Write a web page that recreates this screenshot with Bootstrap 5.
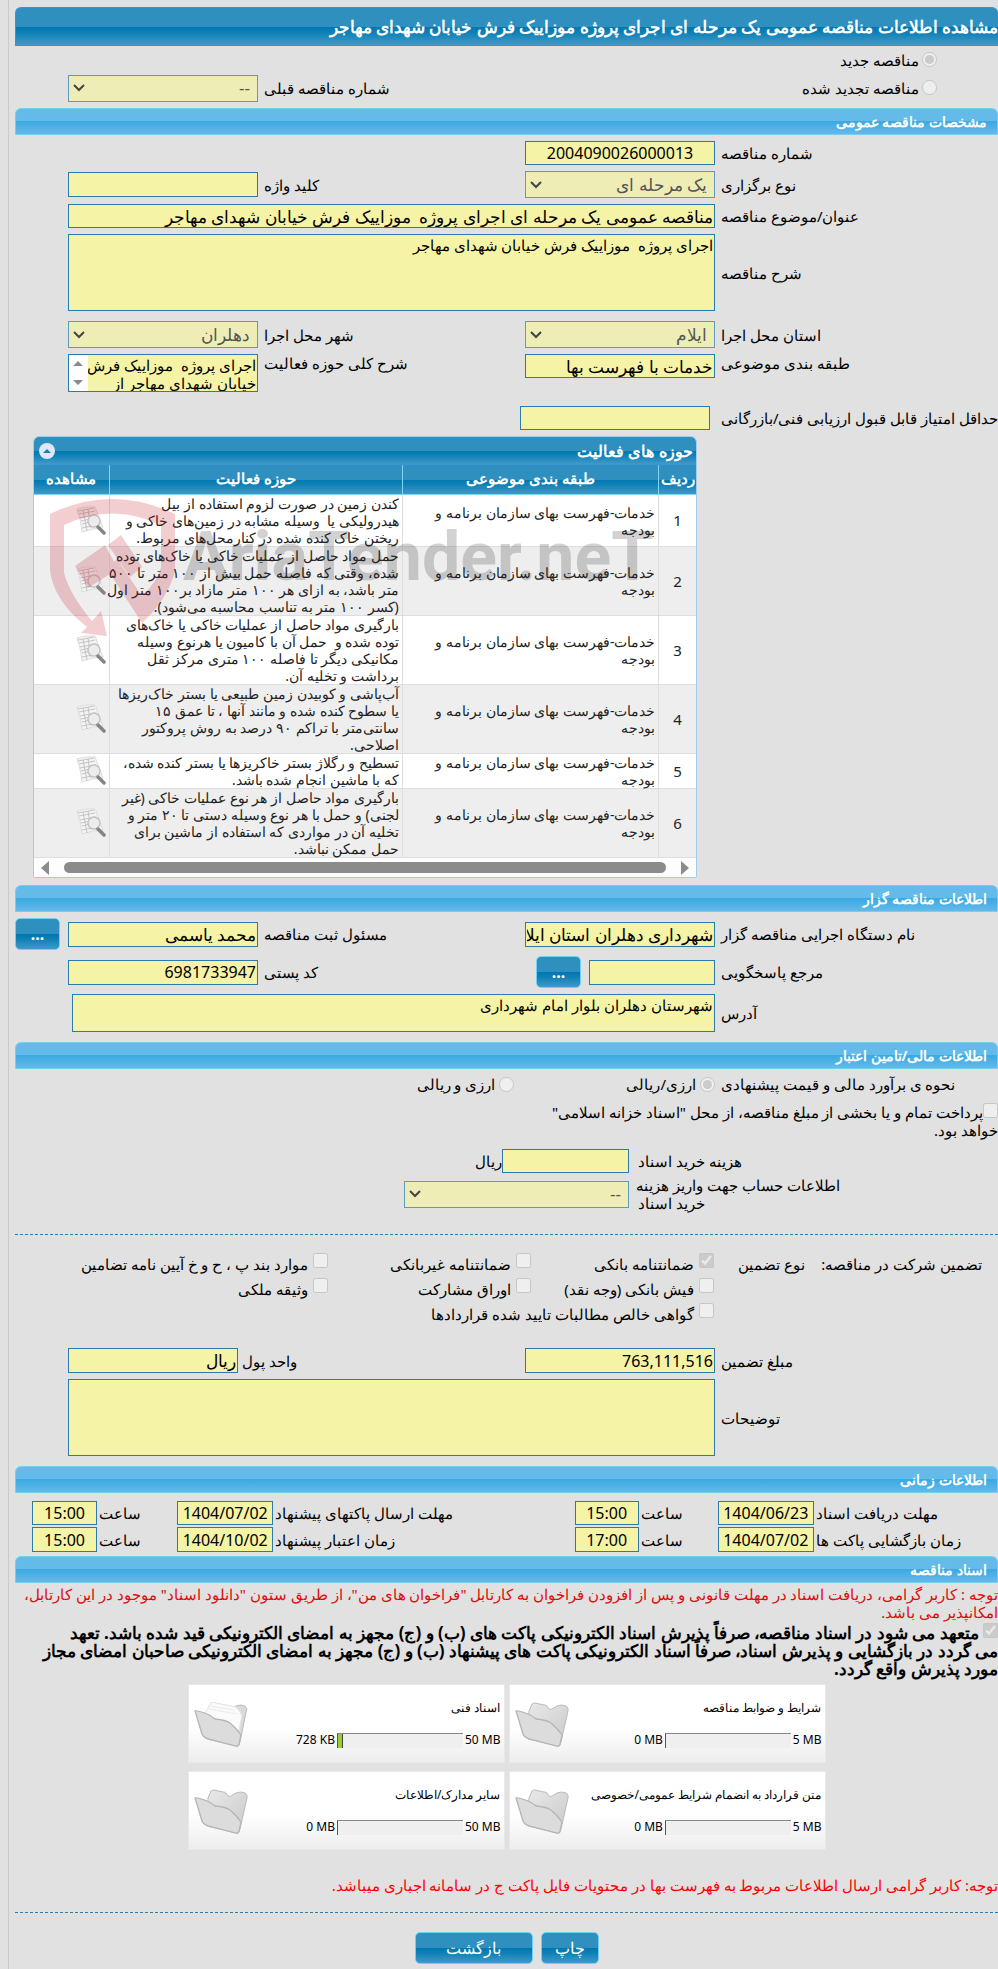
<!DOCTYPE html>
<html lang="fa" dir="rtl">
<head>
<meta charset="utf-8">
<meta name="viewport" content="width=device-width, initial-scale=1">
<title>مشاهده اطلاعات مناقصه عمومی</title>
<link href="https://cdn.jsdelivr.net/npm/bootstrap@5.3.0/dist/css/bootstrap.min.css" rel="stylesheet">
<style>
  :root { --edge: #2a7bab; --field: #f5f3a6; }
  body { background: #e1e1e1; color: #000; font: 15px/18px "Noto Sans"; overflow-x: hidden; }
  input, select, textarea, button { font-family: inherit; }
  .page-shell { margin-left: 8px; padding: 7px 0 6px 6px; border-left: 1px solid #cacaca; }
  .stack { display: flex; flex-direction: column; gap: 6px; }

  .title-bar, .grid-bar, .fields-table th, .btn-blue {
    background-image: linear-gradient(#2f90c0 0, #2f90c0 50%, #0077b0 51%, #0d7fb5 65%, #4199c8 100%);
    color: #fff;
  }
  .title-bar { height: 39px; border: 1px solid #3a90d4; border-right: 0; border-radius: 6px 6px 0 0; font-size: 17px; line-height: 37px; font-weight: 700; white-space: nowrap; margin: 0 0 -6px; }
  .section-bar { height: 27px; border: 1px solid #79cdf3; border-radius: 6px 6px 0 0; padding-right: 10px; margin: 0; color: #fff; font-size: 14px; line-height: 25px; font-weight: 700;
    background-image: linear-gradient(#64bbea 0, #64bbea 48%, #3ba9e2 50%, #64baea 100%); }

  .ff { width: 100%; min-width: 0; height: 24px; border: 1px solid var(--edge); border-radius: 0; background: var(--field); color: #000; padding: 0 1px; font-size: 17px; line-height: 22px; display: block; }
  .ff-num { font-size: 16px; }
  textarea.ff { resize: none; overflow: hidden; font-size: 15px; line-height: 18px; padding-top: 1px; }
  select.ff { height: 27px; appearance: none; padding: 0 7px; color: #555; opacity: 1; border-color: #5f9bc0;
    background: #efedb6 url("data:image/svg+xml,%3Csvg xmlns='http://www.w3.org/2000/svg' width='12' height='8'%3E%3Cpath d='M1 1 6 6 11 1' fill='none' stroke='%23444' stroke-width='2'/%3E%3C/svg%3E") no-repeat left 4px center; }
  .ff.h-tall { height: 25px; }
  .ff.h-area { height: 38px; }
  .ff.h-note { height: 77px; }
  .ff.w-fee { width: 127px; }
  .ff.w-unit { width: 170px; }
  .lbl { text-align: left; white-space: nowrap; }
  input[type=radio], input[type=checkbox] { width: 15px; height: 15px; margin: 0; flex: none; }

  .form-grid { display: grid; grid-template-columns: minmax(0,277fr) minmax(0,190fr) minmax(0,255fr) minmax(0,190fr) minmax(0,47fr); column-gap: 6px; align-items: center; }
  .wide { grid-column: 2 / 5; }
  .two-first { grid-column: 1 / 3; }
  .two-last { grid-column: 3 / 5; }
  .shifted { margin: 0 5px 0 -5px; }
  .kind { padding-right: 61px; height: 28px; display: flex; align-items: center; gap: 3px; white-space: nowrap; }
  .kind input { margin-bottom: 2px; }
  .ref-gap { margin-left: 11px; }
  .cur-gap { padding-right: 112px; }
  .pay-grid { display: grid; grid-template-columns: minmax(0,360fr) minmax(0,225fr) minmax(0,380fr); column-gap: 9px; row-gap: 3px; align-items: center; }
  .pay-lines { width: 202px; margin-right: auto; white-space: nowrap; }
  .date-grid { margin: 2px 0 -2px; display: grid; grid-template-columns: minmax(0,182fr) minmax(0,96fr) minmax(0,75fr) minmax(0,64fr) minmax(0,297fr) minmax(0,96fr) minmax(0,76fr) minmax(0,65fr) minmax(0,15fr); column-gap: 2px; row-gap: 2px; align-items: center; }
  .bond-grid { margin-top: 10px; display: grid; grid-template-columns: minmax(0,284fr) minmax(0,183fr) minmax(0,203fr) minmax(0,313fr); }
  .bond-grid > * { height: 25px; white-space: nowrap; display: flex; align-items: center; gap: 5px; }
  .bond-grid input[type=checkbox] { margin-bottom: 6px; }

  .scroll-area { display: flex; border: 1px solid var(--edge); height: 38px; }
  .scroll-area .ff { border: 0; height: 36px; white-space: pre; }
  .scroll-rail { width: 19px; flex: none; background: #fdfdfd; }

  .grid-box { width: 67.5%; border: 1px solid #a3cbea; border-radius: 6px 6px 2px 2px; background: #fff; position: relative; margin: 0 auto 1px 18px; }
  .grid-bar { height: 28px; border-radius: 5px 5px 0 0; font-size: 16px; font-weight: 700; padding: 0 3px 0 5px; border-bottom: 1px solid #3f95d0; }
  .fold { border: 0; padding: 0; background: none; line-height: 0; }
  .fields-table { width: 100%; table-layout: fixed; font-size: 14px; line-height: 17px; color: #222; border-collapse: separate; border-spacing: 0; }
  .fields-table th { height: 30px; padding: 0 0 3px; text-align: center; font-size: 15px; border-bottom: 1px solid #7fd6f7; border-left: 1px solid #7fd6f7; }
  .fields-table td { padding: 0 3px; background: #fff; border-bottom: 1px solid #dedede; border-left: 1px solid #dedede; vertical-align: middle; white-space: nowrap; }
  .fields-table tr:nth-child(even) td { background: #eee; }
  .fields-table th:last-child, .fields-table td:last-child { border-left: 0; }
  .fields-table td:first-child { text-align: center; font-size: 15px; }
  .c-row { width: 5.6%; } .c-class { width: 38.8%; } .c-area { width: 44.3%; } .c-view { width: 11.3%; }
  .h-rail { height: 19px; padding: 0 7px; gap: 15px; background: #fdfdfd; }
  .h-thumb { height: 11px; border-radius: 6px; background: #8b8b8b; }
  .watermark { position: absolute; top: 62px; left: 16px; display: flex; direction: ltr; pointer-events: none; opacity: .2; }
  .watermark span { font: 700 68px/80px Roboto; color: #222; margin: 18px 0 0 8px; }

  .btn-blue { height: 32px; border: 1px solid #6fd0f6; border-radius: 5px; padding: 0; font-size: 16px; line-height: 28px; }
  .btn-blue:hover { color: #fff; }
  .btn-dots { width: 45px; font-weight: 700; }
  .btn-print { width: 58px; }
  .btn-back { width: 118px; }
  .dash { border: 0; border-top: 1px dashed var(--edge); opacity: 1; margin: 0; }
  .notice { color: #e00b0b; margin: 2px 0 0; }
  .notice-last { color: #f00; margin: 20px 0 12px; }
  .actions { margin-top: 13px; }
  .pledge { font-size: 17px; font-weight: 700; line-height: 18px; margin-top: 2px; }
  .pledge input { vertical-align: 1px; }

  .doc-grid { display: grid; grid-template-columns: 317px 317px; gap: 8px 4px; justify-content: center; }
  .doc-card { height: 79px; background: linear-gradient(#fff 55%, #ededed); border: 1px solid #e9e9e9; padding: 14px 3px 0 5px; font-size: 12px; line-height: 18px; }
  .doc-card svg { margin-top: 3px; flex: none; }
  .meter-row { margin-top: 14px; gap: 2px; }
  .meter-box { width: 126px; height: 15px; background: #efefef; border-top: 1px solid #888; border-left: 1px solid #555; direction: ltr; }
  .meter-fill { height: 100%; background: #9acd32; border-right: 1px solid #444; }
</style>
</head>
<body>
<svg width="0" height="0" class="position-absolute" aria-hidden="true">
  <defs>
    <linearGradient id="gf" x1="0" y1="0" x2="1" y2="1"><stop offset="0" stop-color="#e9e9e9"/><stop offset="1" stop-color="#c9c9c9"/></linearGradient>
    <symbol id="folder" viewBox="0 0 54 46">
      <path d="M14 9 17 2Q18 1 20 1L29 3Q31 3 32 4L34 7Q35 8 37 7L42 4Q47 2 51 4 54 6 53 9L46 40Q45 45 43 44L13 37Z" fill="url(#gf)" stroke="#bbb"/>
      <path d="M1 9Q2 8 13 12 16 13 21 17 32 18 36 21 43 27 47 33L45 42Q44 45 42 44L14 37Q9 35 8 32Z" fill="#dcdcdc" stroke="#b5b5b5" stroke-width="1.3"/>
    </symbol>
    <symbol id="folder-full" viewBox="0 0 54 46">
      <path d="M38 6 42 4Q47 2 51 4 54 6 52 10L46 40Q45 45 43 44L13 37Z" fill="#dadada" stroke="#bbb"/>
      <path d="M11 12 17 0 42 5Q47 10 48 14L43 38Z" fill="#fafafa" stroke="#e2e2e2"/>
      <path d="M16 4 40 8M15 7 43 12" stroke="#ececec" fill="none"/>
      <path d="M1 9Q2 8 13 12 16 13 21 17 32 18 36 21 43 27 47 33L45 42Q44 45 42 44L14 37Q9 35 8 32Z" fill="#dcdcdc" stroke="#b5b5b5" stroke-width="1.3"/>
    </symbol>
    <symbol id="look" viewBox="0 0 30 30">
      <path d="M1 3Q9 0 19 1L27 22Q17 22 6 26Q5 14 1 3Z" fill="#f4f4f4" stroke="#ddd"/>
      <path d="M2 5 18 2M3 8 19 5M4 12 20 9M5 15 14 13M6 18 14 16M6 22 16 20M7 4 11 25M12 3 15 22" stroke="#c4c4c4" fill="none"/>
      <circle cx="18" cy="15" r="6" fill="#ececec" stroke="#c4c4c4" stroke-width="1.5"/>
      <path d="m22 21 6 6" stroke="#858585" stroke-width="3.5" stroke-linecap="round"/>
    </symbol>
  </defs>
</svg>

<main class="page-shell stack">
  <h1 class="title-bar">مشاهده اطلاعات مناقصه عمومی یک مرحله ای اجرای پروژه موزاییک فرش خیابان شهدای مهاجر</h1>

  <div>
    <div class="kind"><input type="radio" id="r1" name="kind" checked disabled><label for="r1">مناقصه جدید</label></div>
    <div class="form-grid">
      <div class="kind two-first"><input type="radio" id="r2" name="kind" disabled><label for="r2">مناقصه تجدید شده</label></div>
      <label class="lbl" for="prev">شماره مناقصه قبلی</label>
      <select class="ff" id="prev" disabled><option>--</option></select>
    </div>
  </div>

  <h2 class="section-bar">مشخصات مناقصه عمومی</h2>
  <div class="form-grid">
    <label class="lbl" for="no">شماره مناقصه</label>
    <input class="ff ff-num text-center" id="no" value="2004090026000013" readonly>
  </div>
  <div class="form-grid">
    <label class="lbl" for="type">نوع برگزاری</label>
    <select class="ff" id="type" disabled><option>یک مرحله ای</option></select>
    <label class="lbl" for="key">کلید واژه</label>
    <input class="ff h-tall" id="key" readonly>
  </div>
  <div class="form-grid">
    <label class="lbl" for="subj">عنوان/موضوع مناقصه</label>
    <input class="ff wide" id="subj" value="مناقصه عمومی یک مرحله ای اجرای پروژه  موزاییک فرش خیابان شهدای مهاجر" readonly>
  </div>
  <div class="form-grid">
    <label class="lbl" for="desc">شرح مناقصه</label>
    <textarea class="ff h-note wide" id="desc" readonly>اجرای پروژه  موزاییک فرش خیابان شهدای مهاجر</textarea>
  </div>
  <div class="form-grid mt-1">
    <label class="lbl" for="prov">استان محل اجرا</label>
    <select class="ff" id="prov" disabled><option>ایلام</option></select>
    <label class="lbl" for="city">شهر محل اجرا</label>
    <select class="ff" id="city" disabled><option>دهلران</option></select>
  </div>
  <div class="form-grid align-items-start">
    <label class="lbl" for="cls">طبقه بندی موضوعی</label>
    <input class="ff" id="cls" value="خدمات با فهرست بها" readonly>
    <label class="lbl" for="area">شرح کلی حوزه فعالیت</label>
    <div class="scroll-area">
      <textarea class="ff" id="area" readonly>اجرای پروژه  موزاییک فرش
خیابان شهدای مهاجر از</textarea>
      <svg class="scroll-rail" width="19" height="36" viewBox="0 0 19 36" aria-hidden="true"><path d="M4 11 9 6l5 5ZM4 25l5 5 5-5Z" fill="#8b8b8b"/></svg>
    </div>
  </div>
  <div class="form-grid mt-2">
    <label class="lbl" for="score">حداقل امتیاز قابل قبول ارزیابی فنی/بازرگانی</label>
    <div class="shifted"><input class="ff" id="score" readonly></div>
  </div>

  <section class="grid-box">
    <div class="grid-bar d-flex align-items-center justify-content-between">
      <span>حوزه های فعالیت</span>
      <button class="fold" type="button" aria-label="جمع کردن"><svg width="16" height="16" viewBox="0 0 16 16"><circle cx="8" cy="8" r="8" fill="#dfe6f5"/><path d="M4 10 8 6l4 4Z" fill="#1a7db5"/></svg></button>
    </div>
    <table class="fields-table">
      <colgroup><col class="c-row"><col class="c-class"><col class="c-area"><col class="c-view"></colgroup>
      <thead><tr><th>ردیف</th><th>طبقه بندی موضوعی</th><th>حوزه فعالیت</th><th>مشاهده</th></tr></thead>
      <tbody>
        <tr><td>1</td><td>خدمات-فهرست بهای سازمان برنامه و<br>بودجه</td><td>کندن زمین در صورت لزوم استفاده از بیل<br>هیدرولیکی یا &nbsp;وسیله مشابه در زمین‌های خاکی و<br>ریختن خاک کنده شده در کنارمحل‌های مربوط.</td><td><svg width="30" height="30"><use href="#look"/></svg></td></tr>
        <tr><td>2</td><td>خدمات-فهرست بهای سازمان برنامه و<br>بودجه</td><td>حمل مواد حاصل از عملیات خاکی یا خاک‌های توده<br>شده، وقتی که فاصله حمل بیش از ۱۰۰ متر تا ۵۰۰<br>متر باشد، به ازای هر ۱۰۰ متر مازاد بر۱۰۰ متر اول<br>(کسر ۱۰۰ متر به تناسب محاسبه می‌شود).</td><td><svg width="30" height="30"><use href="#look"/></svg></td></tr>
        <tr><td>3</td><td>خدمات-فهرست بهای سازمان برنامه و<br>بودجه</td><td>بارگیری مواد حاصل از عملیات خاکی یا خاک‌های<br>توده شده و &nbsp;حمل آن با کامیون یا هرنوع وسیله<br>مکانیکی دیگر تا فاصله ۱۰۰ متری مرکز ثقل<br>برداشت و تخلیه آن.</td><td><svg width="30" height="30"><use href="#look"/></svg></td></tr>
        <tr><td>4</td><td>خدمات-فهرست بهای سازمان برنامه و<br>بودجه</td><td>آب‌پاشی و کوبیدن زمین طبیعی یا بستر خاک‌ریزها<br>یا سطوح کنده شده و مانند آنها ، تا عمق ۱۵<br>سانتی‌متر با تراکم ۹۰ درصد به روش پروکتور<br>اصلاحی.</td><td><svg width="30" height="30"><use href="#look"/></svg></td></tr>
        <tr><td>5</td><td>خدمات-فهرست بهای سازمان برنامه و<br>بودجه</td><td>تسطیح و رگلاژ بستر خاکریزها یا بستر کنده شده،<br>که با ماشین انجام شده باشد.</td><td><svg width="30" height="30"><use href="#look"/></svg></td></tr>
        <tr><td>6</td><td>خدمات-فهرست بهای سازمان برنامه و<br>بودجه</td><td>بارگیری مواد حاصل از هر نوع عملیات خاکی (غیر<br>لجنی) و حمل با هر نوع وسیله دستی تا ۲۰ متر و<br>تخلیه آن در مواردی که استفاده از ماشین برای<br>حمل ممکن نباشد.</td><td><svg width="30" height="30"><use href="#look"/></svg></td></tr>
      </tbody>
    </table>
    <div class="h-rail d-flex align-items-center">
      <svg width="8" height="14" viewBox="0 0 8 14"><path d="M0 0 8 7 0 14Z" fill="#8b8b8b"/></svg>
      <div class="h-thumb flex-fill"></div>
      <svg width="8" height="14" viewBox="0 0 8 14"><path d="M8 0 0 7l8 7Z" fill="#8b8b8b"/></svg>
    </div>
    <div class="watermark" aria-hidden="true">
      <svg width="125" height="138" viewBox="0 0 125 138" fill="#c01020">
        <path d="M0 15Q62-15 125 15V72Q118 100 92 124L57 70 67 60 92 97Q108 82 111 68V26Q62 3 14 26V74Q20 96 42 122L51 112 57 137 31 134 37 128Q4 102 0 72Z"/>
        <path d="M25 67 55 46 68 70 38 89ZM58 46 71 36 92 68 80 78Z"/>
      </svg>
      <span>AriaTender.neT</span>
    </div>
  </section>

  <h2 class="section-bar">اطلاعات مناقصه گزار</h2>
  <div class="form-grid">
    <label class="lbl" for="org">نام دستگاه اجرایی مناقصه گزار</label>
    <input class="ff h-tall" id="org" value="شهرداری دهلران استان ایلام" readonly>
    <label class="lbl" for="resp">مسئول ثبت مناقصه</label>
    <input class="ff h-tall" id="resp" value="محمد یاسمی" readonly>
    <div class="d-flex justify-content-end"><button class="btn btn-blue btn-dots" type="button">...</button></div>
  </div>
  <div class="form-grid">
    <label class="lbl" for="ref">مرجع پاسخگویی</label>
    <div class="d-flex align-items-center gap-2">
      <input class="ff h-tall" id="ref" readonly>
      <button class="btn btn-blue btn-dots ref-gap flex-shrink-0" type="button">...</button>
    </div>
    <label class="lbl" for="zip">کد پستی</label>
    <input class="ff ff-num h-tall" id="zip" value="6981733947" readonly>
  </div>
  <div class="form-grid">
    <label class="lbl" for="addr">آدرس</label>
    <div class="wide ps-1"><textarea class="ff h-area" id="addr" readonly>شهرستان دهلران بلوار امام شهرداری</textarea></div>
  </div>

  <h2 class="section-bar mt-1">اطلاعات مالی/تامین اعتبار</h2>
  <div class="form-grid">
    <span class="lbl">نحوه ی برآورد مالی و قیمت پیشنهادی</span>
    <div class="wide d-flex">
      <div class="d-flex align-items-center"><input type="radio" id="c1" name="cur" checked disabled><label for="c1" class="me-1">ارزی/ریالی</label></div>
      <div class="cur-gap d-flex align-items-center"><input type="radio" id="c2" name="cur" disabled><label for="c2" class="me-1">ارزی و ریالی</label></div>
    </div>
  </div>
  <div class="mt-1">
    <input type="checkbox" id="isl" disabled><label for="isl" class="d-inline">پرداخت تمام و یا بخشی از مبلغ مناقصه، از محل "اسناد خزانه اسلامی"<br>خواهد بود.</label>
  </div>
  <div class="pay-grid mt-1">
    <label class="lbl" for="fee">هزینه خرید اسناد</label>
    <div class="d-flex align-items-center"><input class="ff w-fee" id="fee" readonly><span>ریال</span></div>
    <span></span>
    <label for="acc"><span class="d-block pay-lines">اطلاعات حساب جهت واریز هزینه</span><span class="d-block lbl">خرید اسناد</span></label>
    <select class="ff" id="acc" disabled><option>--</option></select>
  </div>

  <hr class="dash mt-3">
  <div class="bond-grid">
    <div class="justify-content-between"><span class="me-3">تضمین شرکت در مناقصه:</span><span class="ms-4">نوع تضمین</span></div>
    <div><input type="checkbox" id="b1" checked disabled><label for="b1">ضمانتنامه بانکی</label></div>
    <div><input type="checkbox" id="b2" disabled><label for="b2">ضمانتنامه غیربانکی</label></div>
    <div><input type="checkbox" id="b3" disabled><label for="b3">موارد بند پ ، ح و خ آیین نامه تضامین</label></div>
    <div></div>
    <div><input type="checkbox" id="b4" disabled><label for="b4">فیش بانکی (وجه نقد)</label></div>
    <div><input type="checkbox" id="b5" disabled><label for="b5">اوراق مشارکت</label></div>
    <div><input type="checkbox" id="b6" disabled><label for="b6">وثیقه ملکی</label></div>
    <div></div>
    <div><input type="checkbox" id="b7" disabled><label for="b7">گواهی خالص مطالبات تایید شده قراردادها</label></div>
  </div>
  <div class="form-grid mt-3">
    <label class="lbl" for="amt">مبلغ تضمین</label>
    <input class="ff ff-num h-tall" id="amt" value="763,111,516" readonly>
    <div class="d-flex align-items-center gap-1 two-last">
      <label class="lbl flex-fill" for="unit">واحد پول</label>
      <input class="ff h-tall w-unit" id="unit" value="ریال" readonly>
    </div>
  </div>
  <div class="form-grid">
    <label class="lbl" for="note">توضیحات</label>
    <textarea class="ff h-note wide" id="note" readonly></textarea>
  </div>

  <h2 class="section-bar mt-1">اطلاعات زمانی</h2>
  <div class="date-grid">
    <label class="lbl" for="d1">مهلت دریافت اسناد</label><input class="ff ff-num text-center" id="d1" value="1404/06/23" readonly>
    <label class="lbl" for="t1">ساعت</label><input class="ff ff-num text-center" id="t1" value="15:00" readonly>
    <label class="lbl" for="d2">مهلت ارسال پاکتهای پیشنهاد</label><input class="ff ff-num text-center" id="d2" value="1404/07/02" readonly>
    <label class="lbl" for="t2">ساعت</label><input class="ff ff-num text-center" id="t2" value="15:00" readonly>
    <span></span>
    <label class="lbl" for="d3">زمان بازگشایی پاکت ها</label><input class="ff ff-num text-center h-tall" id="d3" value="1404/07/02" readonly>
    <label class="lbl" for="t3">ساعت</label><input class="ff ff-num text-center h-tall" id="t3" value="17:00" readonly>
    <label class="lbl" for="d4">زمان اعتبار پیشنهاد</label><input class="ff ff-num text-center h-tall" id="d4" value="1404/10/02" readonly>
    <label class="lbl" for="t4">ساعت</label><input class="ff ff-num text-center h-tall" id="t4" value="15:00" readonly>
  </div>

  <section>
    <h2 class="section-bar">اسناد مناقصه</h2>
    <p class="notice">توجه : کاربر گرامی، دریافت اسناد در مهلت قانونی و پس از افزودن فراخوان به کارتابل "فراخوان های من"، از طریق ستون "دانلود اسناد" موجود در این کارتابل،<br>امکانپذیر می باشد.</p>
    <div class="pledge"><input type="checkbox" id="pl" checked disabled><label for="pl" class="d-inline"> متعهد می شود در اسناد مناقصه، صرفاً پذیرش اسناد الکترونیکی پاکت های (ب) و (ج) مجهز به امضای الکترونیکی قید شده باشد. تعهد<br>می گردد در بازگشایی و پذیرش اسناد، صرفاً اسناد الکترونیکی پاکت های پیشنهاد (ب) و (ج) مجهز به امضای الکترونیکی صاحبان امضای مجاز<br>مورد پذیرش واقع گردد.</label></div>
  </section>

  <div class="doc-grid">
    <div class="doc-card d-flex justify-content-between">
      <div><div>شرایط و ضوابط مناقصه</div><div class="meter-row d-flex align-items-center"><span dir="ltr">5 MB</span><div class="meter-box"></div><span dir="ltr">0 MB</span></div></div>
      <svg width="54" height="46"><use href="#folder"/></svg>
    </div>
    <div class="doc-card d-flex justify-content-between">
      <div><div>اسناد فنی</div><div class="meter-row d-flex align-items-center"><span dir="ltr">50 MB</span><div class="meter-box"><div class="meter-fill" style="width:4%"></div></div><span dir="ltr">728 KB</span></div></div>
      <svg width="54" height="46"><use href="#folder-full"/></svg>
    </div>
    <div class="doc-card d-flex justify-content-between">
      <div><div>متن قرارداد به انضمام شرایط عمومی/خصوصی</div><div class="meter-row d-flex align-items-center"><span dir="ltr">5 MB</span><div class="meter-box"></div><span dir="ltr">0 MB</span></div></div>
      <svg width="54" height="46"><use href="#folder"/></svg>
    </div>
    <div class="doc-card d-flex justify-content-between">
      <div><div>سایر مدارک/اطلاعات</div><div class="meter-row d-flex align-items-center"><span dir="ltr">50 MB</span><div class="meter-box"></div><span dir="ltr">0 MB</span></div></div>
      <svg width="54" height="46"><use href="#folder"/></svg>
    </div>
  </div>

  <p class="notice-last">توجه: کاربر گرامی ارسال اطلاعات مربوط به فهرست بها در محتویات فایل پاکت ج در سامانه اجباری میباشد.</p>
  <hr class="dash">
  <div class="actions d-flex justify-content-center gap-2">
    <button class="btn btn-blue btn-print" type="button">چاپ</button>
    <button class="btn btn-blue btn-back" type="button">بازگشت</button>
  </div>
</main>
<script src="https://cdn.jsdelivr.net/npm/bootstrap@5.3.0/dist/js/bootstrap.bundle.min.js"></script>
</body>
</html>
